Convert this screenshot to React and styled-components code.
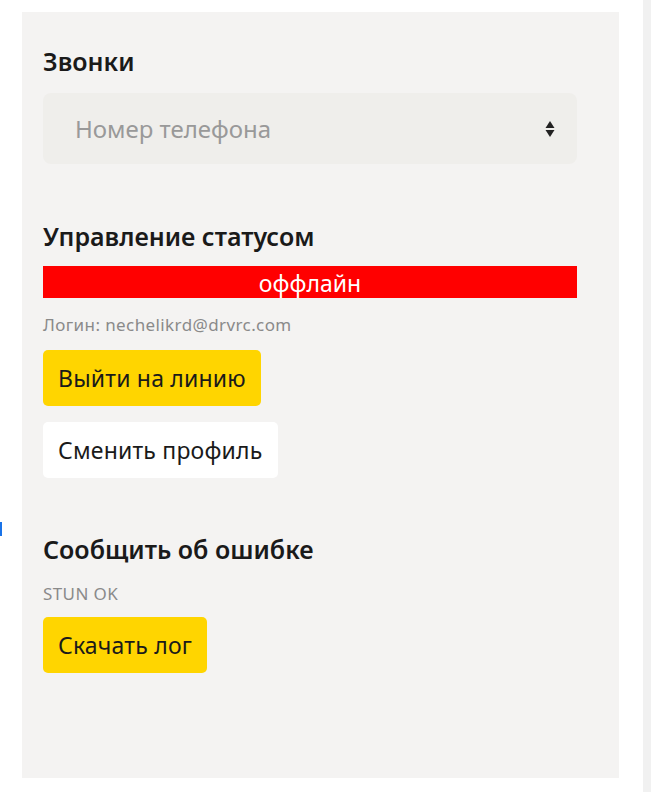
import React from 'react';
import styled, { createGlobalStyle } from 'styled-components';

const GlobalStyle = createGlobalStyle`
  html, body {
    margin: 0;
    padding: 0;
    background: #ffffff;
    font-family: "Noto Sans", "Open Sans", Arial, sans-serif;
  }
`;

const Page = styled.div`
  display: flex;
  flex-direction: row;
  align-items: flex-start;
  height: 792px;
  padding-top: 12px;
  box-sizing: border-box;
`;

const EdgeMark = styled.div`
  width: 2px;
  height: 14px;
  margin-top: 510px;
  background: #1a73e8;
  flex-shrink: 0;
`;

const Panel = styled.div`
  box-sizing: border-box;
  margin-left: 20px;
  width: 597px;
  height: 766px;
  background: #f4f3f2;
  padding: 34px 42px 0 21px;
  display: flex;
  flex-direction: column;
`;

const Scrollbar = styled.div`
  margin-left: auto;
  margin-top: -12px;
  width: 8px;
  height: 792px;
  background: #f1f1f1;
`;

const Section = styled.section`
  display: flex;
  flex-direction: column;
  align-items: flex-start;
  margin-bottom: ${p => p.$gap || 0}px;
`;

const Heading = styled.h2`
  margin: 0;
  font-size: 25px;
  line-height: 30px;
  font-weight: 600;
  color: #1a1a1a;
`;

const Select = styled.div`
  box-sizing: border-box;
  margin-top: 17px;
  width: 534px;
  height: 71px;
  border-radius: 8px;
  background: #efeeeb;
  display: flex;
  align-items: center;
  justify-content: space-between;
  padding: 0 22px 0 32px;
  font-size: 24px;
  color: #999999;
`;

const StatusBar = styled.div`
  margin-top: 15px;
  width: 534px;
  height: 32px;
  background: #ff0000;
  color: #ffffff;
  font-size: 23px;
  line-height: 35px;
  text-align: center;
`;

const Note = styled.div`
  margin-top: ${p => p.$top || 0}px;
  font-size: 17px;
  line-height: 22px;
  letter-spacing: 0.4px;
  color: #8a8a8a;
`;

const Button = styled.button`
  box-sizing: border-box;
  margin-top: ${p => p.$top || 0}px;
  height: 56px;
  padding: 0 15px;
  border: none;
  border-radius: 5px;
  background: ${p => (p.$primary ? '#ffd500' : '#ffffff')};
  color: #1a1a1a;
  font-family: inherit;
  font-size: 23px;
  letter-spacing: 0.2px;
  cursor: pointer;
`;

const Arrows = () => (
  <svg width="10" height="18" viewBox="0 0 10 18">
    <path d="M5 1 L9.5 8 L0.5 8 Z" fill="#222" />
    <path d="M5 17 L9.5 10 L0.5 10 Z" fill="#222" />
  </svg>
);

export default function App() {
  return (
    <>
      <GlobalStyle />
      <Page>
        <EdgeMark />
        <Panel>
          <Section $gap={57}>
            <Heading>Звонки</Heading>
            <Select>
              <span>Номер телефона</span>
              <Arrows />
            </Select>
          </Section>
          <Section $gap={56}>
            <Heading>Управление статусом</Heading>
            <StatusBar>оффлайн</StatusBar>
            <Note $top={16}>Логин: nechelikrd@drvrc.com</Note>
            <Button $primary $top={14}>Выйти на линию</Button>
            <Button $top={16}>Сменить профиль</Button>
          </Section>
          <Section>
            <Heading>Сообщить об ошибке</Heading>
            <Note $top={19}>STUN OK</Note>
            <Button $primary $top={12}>Скачать лог</Button>
          </Section>
        </Panel>
        <Scrollbar />
      </Page>
    </>
  );
}
